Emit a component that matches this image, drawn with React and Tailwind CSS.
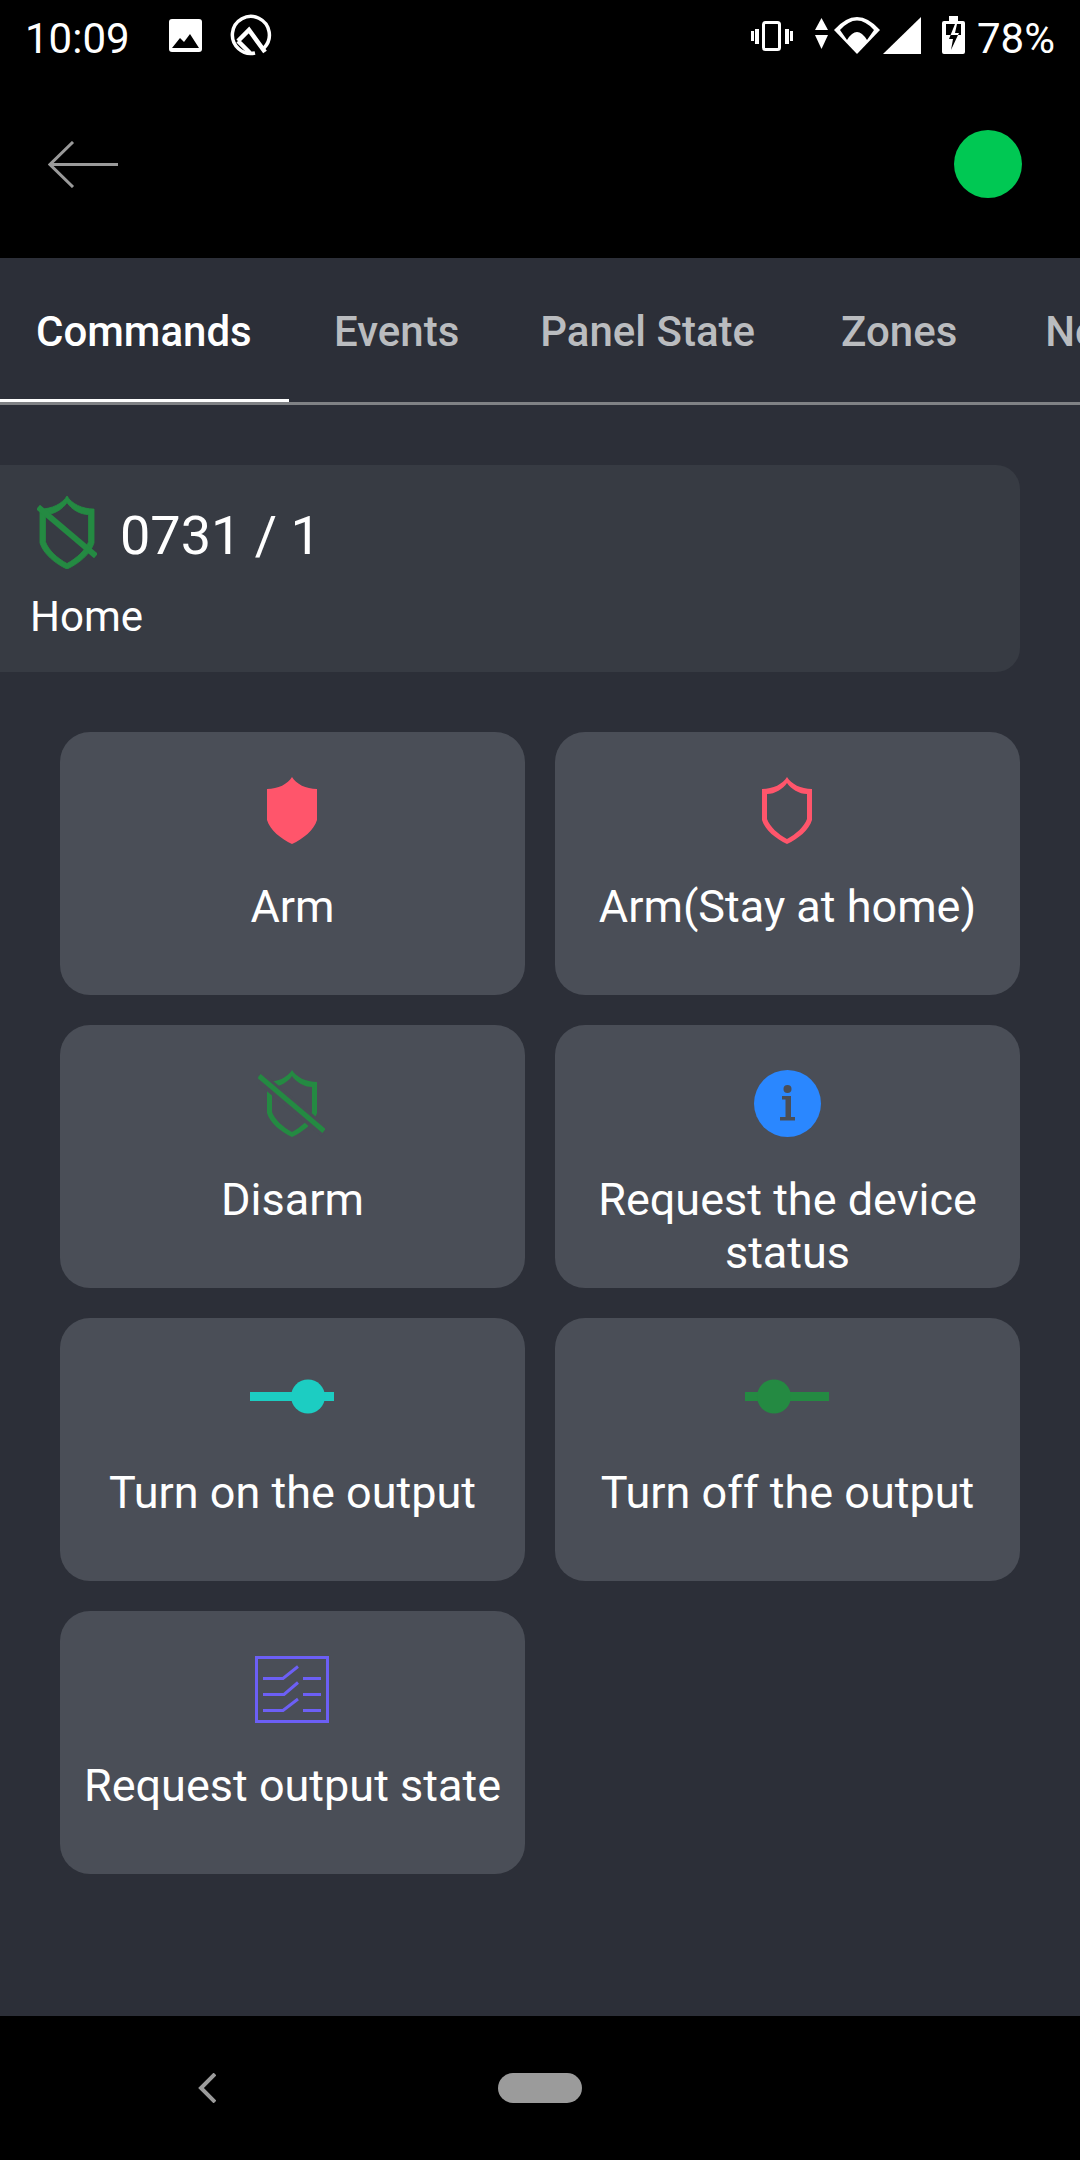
import React from "react";

const RED = "#ff556b";
const GREEN = "#248a42";

const SHIELD_OUTER = "M25 0C21 7 11 12 0 12V43C3 53 14 62 25 67C36 62 47 53 50 43V12C39 12 29 7 25 0Z";
const SHIELD_INNER = "M25 6C21 12 13 17 5 17V42C8 50 16 57 25 62C34 57 42 50 45 42V17C37 17 29 12 25 6Z";

const ShieldFull = () => (
  <svg className="mr-[1px]" width="50" height="67" viewBox="0 0 50 67">
    <path d={SHIELD_OUTER} fill={RED} />
  </svg>
);

const ShieldLine = () => (
  <svg className="mr-[1px]" width="50" height="67" viewBox="0 0 50 67">
    <path d={SHIELD_OUTER + SHIELD_INNER} fill={RED} fillRule="evenodd" />
  </svg>
);

const ShieldOff = () => (
  <svg className="mr-[2px]" width="67" height="67" viewBox="0 0 67 67">
    <path d={SHIELD_OUTER + SHIELD_INNER} fill={GREEN} fillRule="evenodd" transform="translate(9 0)" />
    <path d="M0 6L67 62" stroke="#4a4e57" strokeWidth="12" />
    <path d="M1 6L66 61" stroke={GREEN} strokeWidth="5" />
  </svg>
);

const ShieldOffSmall = () => (
  <svg width="60" height="73" viewBox="0 0 60 73">
    <g transform="translate(3 0) scale(1.08 1.09)">
      <path d={SHIELD_OUTER + SHIELD_INNER} fill={GREEN} stroke={GREEN} strokeWidth="0.8" fillRule="evenodd" />
    </g>
    <path d="M1 11L59 60" stroke={GREEN} strokeWidth="6" />
  </svg>
);

const InfoIcon = () => (
  <svg width="67" height="67" viewBox="0 0 67 67">
    <circle cx="33.5" cy="33.5" r="33.5" fill="#2a87ff" />
    <circle cx="33.5" cy="19" r="4" fill="#4a4e57" />
    <path d="M28 26H37V47H41V50.5H26V47H31.5V29.5H28Z" fill="#4a4e57" />
  </svg>
);

const SwitchOn = () => (
  <svg className="mr-[1px]" width="84" height="67" viewBox="0 0 84 67">
    <rect x="0" y="29" width="84" height="9" fill="#1ccdc2" />
    <circle cx="58" cy="33.5" r="17" fill="#1ccdc2" />
  </svg>
);

const SwitchOff = () => (
  <svg className="mr-[1px]" width="84" height="67" viewBox="0 0 84 67">
    <rect x="0" y="29" width="84" height="9" fill={GREEN} />
    <circle cx="29" cy="33.5" r="17" fill={GREEN} />
  </svg>
);

const OutputIcon = () => (
  <svg className="mr-[1px]" width="74" height="67" viewBox="0 0 74 67" fill="none" stroke="#6c5ff5" strokeWidth="3">
    <rect x="1.5" y="1.5" width="71" height="64" />
    <path d="M8 22.5H28L43 10.5M48 22.5H66" />
    <path d="M8 38.5H29L43 26.5M48 38.5H66" />
    <path d="M8 54.5H28L43 43M48 54.5H66" />
  </svg>
);

const commands = [
  { label: "Arm", icon: <ShieldFull /> },
  { label: "Arm(Stay at home)", icon: <ShieldLine /> },
  { label: "Disarm", icon: <ShieldOff /> },
  { label: "Request the device status", icon: <InfoIcon /> },
  { label: "Turn on the output", icon: <SwitchOn /> },
  { label: "Turn off the output", icon: <SwitchOff /> },
  { label: "Request output state", icon: <OutputIcon /> },
];

const StatusBar = () => (
  <div className="flex h-[84px] items-start text-[42px] leading-[49px] text-white">
    <span className="ml-[25px] mt-[14px] w-[144px]">10:09</span>
    <svg className="mt-[19px]" width="33" height="33" viewBox="0 0 33 33">
      <rect width="33" height="33" rx="3" fill="#fff" />
      <path d="M3 29L11 19L15 23L21 15L30 29Z" fill="#000" />
    </svg>
    <svg className="ml-[28px] mt-[14px]" width="42" height="42" viewBox="0 0 42 42" fill="none" stroke="#fff">
      <path d="M34 34A18.5 18.5 0 1 0 25 39" strokeWidth="3.5" />
      <path d="M8 27L19 16L35 38M8 27L20 39" strokeWidth="4.5" />
    </svg>
    <svg className="ml-[479px] mt-[21px]" width="42" height="30" viewBox="0 0 42 30" fill="#fff">
      <rect x="0" y="10" width="3" height="10" />
      <rect x="4" y="8" width="4" height="15" />
      <rect x="12.5" y="1.5" width="16" height="27" rx="2" fill="none" stroke="#fff" strokeWidth="3" />
      <rect x="34" y="8" width="4" height="15" />
      <rect x="39" y="10" width="3" height="10" />
    </svg>
    <svg className="ml-[22px] mt-[18px]" width="13" height="31" viewBox="0 0 13 31" fill="#fff">
      <path d="M6.5 0L13 12H0Z" />
      <path d="M0 17H13L6.5 31Z" />
    </svg>
    <svg className="ml-[6px] mt-[17px]" width="46" height="37" viewBox="834 17 46 37">
      <path d="M834 30Q857 4 880 30L857 54Z" fill="#fff" />
      <path d="M840 30Q857 11 874 30L867 40Q857 24 847 40Z" fill="#000" />
    </svg>
    <svg className="ml-[3px] mt-[17px]" width="38" height="37" viewBox="0 0 38 37">
      <path d="M0 37H38V0Z" fill="#fff" />
    </svg>
    <svg className="ml-[21px] mt-[16px]" width="23" height="38" viewBox="942 16 23 38">
      <path d="M949 16H958V21H963Q965 21 965 23V52Q965 54 963 54H944Q942 54 942 52V23Q942 21 944 21H949Z" fill="#fff" />
      <rect x="946" y="24" width="15" height="11" fill="#000" />
      <path d="M955 24H957L955 33H959L958 35H950.6Z" fill="#fff" />
      <path d="M950.6 35H958L951 50L953 39H949Z" fill="#000" />
    </svg>
    <span className="ml-[12px] mt-[14px]">78%</span>
  </div>
);

const TopBar = () => (
  <div className="flex h-[174px] items-center justify-between pb-[13px] pl-[48px] pr-[58px]">
    <svg width="70" height="47" viewBox="0 0 70 47" fill="none" stroke="#9a9a9a" strokeWidth="3">
      <path d="M70 23.5H2M25 1L2 23.5L25 46" />
    </svg>
    <div className="mb-[2px] h-[68px] w-[68px] rounded-full bg-[#00c853]" />
  </div>
);

const Tabs = () => (
  <div className="flex h-[147px] overflow-hidden border-b-[3px] border-[#808285] text-[42px] font-medium text-[#babcbf]">
    <div className="flex h-[144px] w-[289px] shrink-0 items-center border-b-[3px] border-white pl-[36px] pt-[5px] text-white">Commands</div>
    <div className="flex h-[144px] shrink-0 items-center pl-[45px] pr-[39px] pt-[3px]">Events</div>
    <div className="flex h-[144px] shrink-0 items-center pl-[42px] pr-[43px] pt-[3px]">Panel State</div>
    <div className="flex h-[144px] shrink-0 items-center pl-[43px] pr-[44px] pt-[3px]">Zones</div>
    <div className="flex h-[144px] shrink-0 items-center pl-[44px] pt-[3px]">Notifications</div>
  </div>
);

const DeviceCard = () => (
  <div className="mt-[60px] h-[207px] w-[1020px] rounded-r-[24px] bg-[#373b43] pl-[30px] text-white">
    <div className="flex items-start pt-[31px]">
      <div className="ml-[7px]">
        <ShieldOffSmall />
      </div>
      <span className="ml-[23px] mt-[8px] text-[54px] leading-[63px]">0731 / 1</span>
    </div>
    <div className="mt-[23px] text-[42px] leading-[49px]">Home</div>
  </div>
);

const CommandButton = ({ label, icon }) => (
  <div className="flex h-[263px] flex-col items-center rounded-[30px] bg-[#4a4e57] px-[12px] pt-[45px] text-white">
    <div className="flex h-[67px] items-center justify-center">{icon}</div>
    <div className="mt-[36px] text-center text-[45px] leading-[53px]">{label}</div>
  </div>
);

export default function App() {
  return (
    <div className="flex h-[2160px] w-[1080px] flex-col overflow-hidden bg-black font-['Roboto',sans-serif]">
      <StatusBar />
      <TopBar />
      <div className="flex-1 bg-[#2c2f38]">
        <Tabs />
        <DeviceCard />
        <div className="ml-[60px] mt-[60px] grid w-[960px] grid-cols-2 gap-[30px]">
          {commands.map((command) => (
            <CommandButton key={command.label} label={command.label} icon={command.icon} />
          ))}
        </div>
      </div>
      <div className="flex h-[144px] items-start pt-[57px]">
        <svg className="ml-[198px]" width="18" height="30" viewBox="0 0 18 30" fill="none" stroke="#9b9b9b" strokeWidth="4">
          <path d="M17 1L3 15L17 29" />
        </svg>
        <div className="ml-[282px] h-[30px] w-[84px] rounded-full bg-[#9b9b9b]" />
      </div>
    </div>
  );
}
